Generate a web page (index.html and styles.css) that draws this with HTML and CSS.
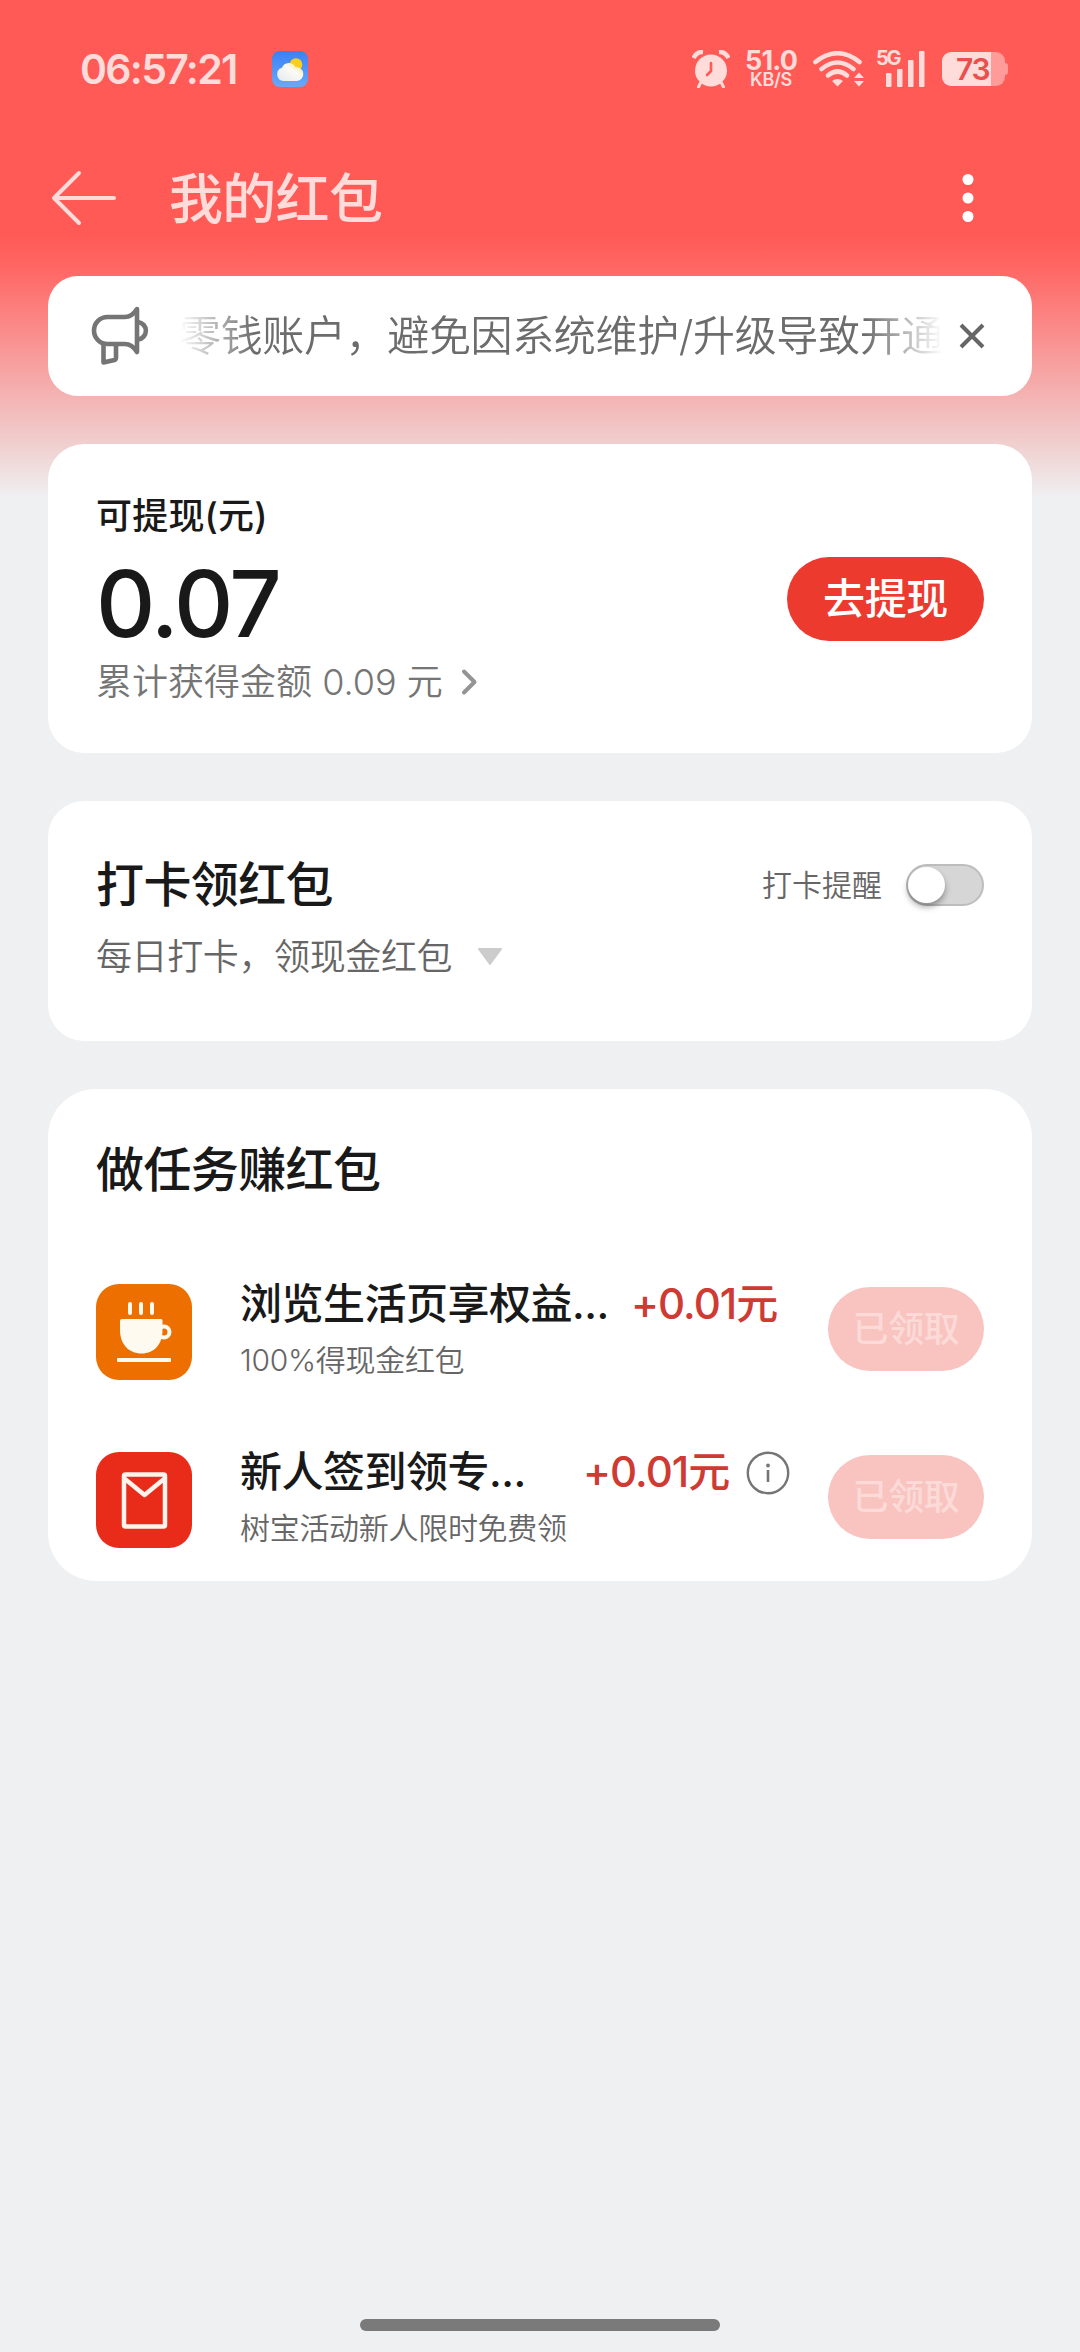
FILE: index.html
```html
<!DOCTYPE html>
<html lang="zh-CN">
<head>
<meta charset="utf-8">
<title>我的红包</title>
<link rel="stylesheet" href="styles.css">
</head>
<body>
<div class="page">
  <div class="status-bar">
    <span class="clock">06:57:21</span>
    <svg class="weather" width="36" height="36" viewBox="0 0 36 36">
      <defs>
        <linearGradient id="sky" x1="0" y1="0" x2="0" y2="1"><stop offset="0" stop-color="#3a7ff6"/><stop offset="1" stop-color="#69aaf6"/></linearGradient>
        <linearGradient id="cloud" x1="0" y1="1" x2="1" y2="0"><stop offset="0" stop-color="#e3e9ef"/><stop offset=".6" stop-color="#fbfbf5"/><stop offset="1" stop-color="#f8dc60"/></linearGradient>
      </defs>
      <rect width="36" height="36" rx="8" fill="url(#sky)"/>
      <circle cx="24" cy="13.5" r="6.3" fill="#fbce1c"/>
      <path d="M11.500 30a6.800 6.800 0 0 1-1.500-13.300a7.500 7.500 0 0 1 13.500-.7a7 7 0 0 1 1.500 14z" fill="url(#cloud)"/>
    </svg>
    <div class="indicators">
      <svg class="alarm" width="38" height="38" viewBox="0 0 38 38" fill="#ffdbda">
        <path d="M1.500 8Q5 1.500 11 2" fill="none" stroke="#ffdbda" stroke-width="4.500"/>
        <path d="M36.500 8Q33 1.500 27 2" fill="none" stroke="#ffdbda" stroke-width="4.500"/>
        <path d="M8.500 33l-2 4M29.500 33l2 4" stroke="#ffdbda" stroke-width="3" stroke-linecap="round"/>
        <circle cx="19" cy="20.500" r="16"/>
        <path d="M19 13v8l-4 4" fill="none" stroke="#ff5a56" stroke-width="2.600" stroke-linecap="round" stroke-linejoin="round"/>
      </svg>
      <div class="speed"><span class="speed-value">51.0</span><span class="speed-unit">KB/S</span></div>
      <svg class="wifi" width="51" height="36" viewBox="0 0 51 36">
        <g fill="none" stroke="#ffdbda" stroke-width="4.600" stroke-linecap="round">
          <path d="M2.500 11Q24.500-6.500 46.500 11"/><path d="M8.500 18Q24.500 5 40.500 18"/><path d="M15 24.500Q24.500 16.500 34 24.500"/>
        </g>
        <path d="M24.500 35.500l-5.500-5.500q5.500-4 11 0z" fill="#ffdbda"/>
        <path d="M46 21.500l5 5.500h-10zM46 35.500l5-5.500h-10z" fill="#ffdbda"/>
      </svg>
      <div class="cell">
        <span class="cell-type">5G</span>
        <svg width="40" height="36" viewBox="0 0 40 36" fill="#ffdbda"><rect x="0" y="22" width="5.500" height="14" rx="1"/><rect x="11" y="18" width="5.500" height="18" rx="1"/><rect x="22" y="9" width="5.500" height="27" rx="1"/><rect x="33" y="0" width="5.500" height="36" rx="1"/></svg>
      </div>
      <div class="battery"><span class="battery-body">73</span><span class="battery-tip"></span></div>
    </div>
  </div>

  <header class="nav">
    <svg class="back" width="66" height="56" viewBox="0 0 66 56" fill="none" stroke="#ffdbda" stroke-width="4" stroke-linecap="round" stroke-linejoin="round"><path d="M28 3L3 28l25 25M3 28h60"/></svg>
    <h1 class="nav-title">我的红包</h1>
    <svg class="more" width="12" height="50" viewBox="0 0 12 50" fill="#fff"><circle cx="6" cy="6.500" r="5.500"/><circle cx="6" cy="25" r="5.500"/><circle cx="6" cy="43.500" r="5.500"/></svg>
  </header>

  <main class="content">
    <section class="card notice">
      <svg class="horn" width="60" height="60" viewBox="0 0 60 60" fill="none" stroke="#757575" stroke-width="4.600" stroke-linejoin="round">
        <path d="M34 11H16.500a13.500 13.500 0 0 0 0 27H34q7 0 12 8V3q-5 8-12 8z"/>
        <path d="M47 16a8.800 8.800 0 0 1 0 17.500M12.500 38v18.500l11-2.500q1.500-.5 1.500-2.500V38"/>
      </svg>
      <div class="notice-text">零钱账户，避免因系统维护/升级导致开通</div>
      <svg class="close" width="28" height="28" viewBox="0 0 28 28" fill="none" stroke="#666" stroke-width="4"><path d="M3 3l22 22M25 3L3 25"/></svg>
    </section>

    <section class="card balance">
      <div>
        <div class="balance-label">可提现(元)</div>
        <div class="balance-amount">0.07</div>
        <div class="balance-total"><span>累计获得金额 0.09 元</span>
          <svg width="18" height="28" viewBox="0 0 18 28" fill="none" stroke="#949494" stroke-width="4" stroke-linecap="round" stroke-linejoin="round"><path d="M4 3.500l10.500 10.500L4 24.500"/></svg>
        </div>
      </div>
      <button class="withdraw">去提现</button>
    </section>

    <section class="card checkin">
      <div class="checkin-head">
        <h2 class="card-title">打卡领红包</h2>
        <span class="remind">打卡提醒</span>
        <span class="toggle"><span class="knob"></span></span>
      </div>
      <div class="checkin-sub"><span>每日打卡，领现金红包</span>
        <svg width="26" height="18" viewBox="0 0 26 18"><path d="M2 1h22L13 16z" fill="#ccc" stroke="#ccc" stroke-width="2" stroke-linejoin="round"/></svg>
      </div>
    </section>

    <section class="card tasks">
      <h2 class="card-title">做任务赚红包</h2>
      <div class="task">
        <svg class="task-icon" width="96" height="96" viewBox="0 0 96 96">
          <rect width="96" height="96" rx="23" fill="#ed6f00"/>
          <g fill="#fffaf0"><path d="M26 35h39q1.500 0 1.500 1.500V46c0 14-8 23.500-21 23.500S24 60 24 46v-9q0-2 2-2z"/><rect x="21" y="74" width="54" height="4" rx="1"/><rect x="32" y="18" width="4" height="13" rx="2"/><rect x="43" y="18" width="4" height="13" rx="2"/><rect x="54" y="18" width="4" height="13" rx="2"/></g>
          <circle cx="68" cy="48" r="5.500" fill="none" stroke="#fffaf0" stroke-width="4"/>
        </svg>
        <div class="task-body">
          <div class="task-row"><span class="task-title">浏览生活页享权益...</span><span class="reward">+0.01元</span></div>
          <div class="task-desc">100%得现金红包</div>
        </div>
        <button class="claimed">已领取</button>
      </div>
      <div class="task">
        <svg class="task-icon" width="96" height="96" viewBox="0 0 96 96">
          <rect width="96" height="96" rx="23" fill="#e92c19"/>
          <g fill="none" stroke="#fff3ee" stroke-width="4.500" stroke-linejoin="round"><rect x="28" y="22.500" width="41" height="52" rx="1.500"/><path d="M29 27l19.500 16L68 27"/></g>
        </svg>
        <div class="task-body">
          <div class="task-row"><span class="task-title task-title-short">新人签到领专...</span><span class="reward">+0.01元</span>
            <svg class="info" width="44" height="44" viewBox="0 0 44 44"><circle cx="22" cy="22" r="20.200" fill="none" stroke="#757575" stroke-width="2.400"/><circle cx="22" cy="14.500" r="1.900" fill="#757575"/><rect x="20.700" y="19" width="2.600" height="12" fill="#757575"/></svg>
          </div>
          <div class="task-desc">树宝活动新人限时免费领</div>
        </div>
        <button class="claimed">已领取</button>
      </div>
    </section>
  </main>
  <div class="home-bar"></div>
</div>
</body>
</html>
```
FILE: styles.css
```css
* { box-sizing: border-box; }

body {
  margin: 0;
  font-family: Inter, "Noto Sans CJK SC", sans-serif;
  color: #191919;
}

h1, h2 { margin: 0; font-weight: 500; }
svg { display: block; flex: none; }
button { border: 0; padding: 0; font-family: inherit; font-weight: 500; color: #fff; }

.page {
  display: flex;
  flex-direction: column;
  width: 1080px;
  height: 2352px;
  background: linear-gradient(#ff5a56 0, #ff5a56 235px, #ff6764 268px, #f4b5b5 400px, #f0cfce 444px, #eff0f2 498px);
  overflow: hidden;
}

/* System status bar */
.status-bar {
  display: flex;
  align-items: center;
  height: 140px;
  padding: 0 72px 2px 80px;
  color: #ffdbda;
}
.clock { width: 192px; font-size: 41px; font-weight: 600; letter-spacing: -1.7px; white-space: nowrap; }
.indicators { display: flex; align-items: center; margin-left: auto; }
.alarm { margin-right: 14px; }
.speed { display: flex; flex-direction: column; align-items: center; width: 54px; font-weight: 700; margin-right: 15px; }
.speed-value { font-size: 27px; line-height: 21px; letter-spacing: -.8px; }
.speed-unit { font-size: 18px; line-height: 17px; font-weight: 600; letter-spacing: -.3px; }
.wifi { margin-right: 12px; }
.cell { display: flex; margin-right: 16px; }
.cell-type { width: 10px; font-size: 20px; line-height: 15px; font-weight: 700; letter-spacing: -2.2px; }
.battery { display: flex; align-items: center; }
.battery-body {
  width: 63px;
  height: 34px;
  padding-left: 14px;
  border-radius: 9px;
  background: linear-gradient(90deg, #ffdbda 49px, #ff9b99 49px);
  color: #e9504d;
  font-size: 30px;
  line-height: 35px;
  font-weight: 600;
  letter-spacing: -1.2px;
}
.battery-tip { width: 3px; height: 12px; border-radius: 0 3px 3px 0; background: #ff9b99; }

/* Title bar */
.nav { display: flex; align-items: center; height: 116px; padding: 0 106px 0 51px; }
.back { margin-right: 52px; }
.nav-title { flex: 1; padding-top: 3px; font-size: 54px; line-height: 60px; letter-spacing: -.7px; color: #ffdbda; }

.content { display: flex; flex-direction: column; padding: 20px 48px 0; }
.card { border-radius: 36px; background: #fff; }
.card-title { padding-top: 1px; font-size: 48px; line-height: 60px; height: 60px; letter-spacing: -.6px; }

.notice { display: flex; align-items: center; height: 120px; padding: 0 46px 0 43px; border-radius: 30px; }
.horn { margin-right: 28px; }
.notice-text {
  width: 764px;
  margin-right: 15px;
  overflow: hidden;
  color: #6c6c6c;
  font-size: 42px;
  line-height: 60px;
  font-weight: 350;
  letter-spacing: -.35px;
  white-space: nowrap;
  -webkit-mask-image: linear-gradient(90deg, transparent, #000 75px, #000 686px, transparent);
  mask-image: linear-gradient(90deg, transparent, #000 75px, #000 686px, transparent);
}

.balance { display: flex; justify-content: space-between; height: 309px; margin-top: 48px; padding: 48px; }
.balance-label { font-size: 36px; line-height: 48px; font-weight: 500; letter-spacing: .2px; }
.balance-amount { margin-top: 5px; font-size: 92px; line-height: 117px; font-weight: 500; letter-spacing: -2.2px; }
.balance-total { display: flex; align-items: center; gap: 17px; font-size: 36px; line-height: 40px; font-weight: 350; color: #757575; }
.withdraw { width: 197px; height: 84px; margin-top: 65px; border-radius: 42px; background: #ec3a2f; font-size: 42px; line-height: 82px; letter-spacing: -.4px; }

.checkin { height: 240px; margin-top: 48px; padding: 53px 48px 0; }
.checkin-head { display: flex; align-items: center; }
.remind { margin: -3px 0 0 auto; font-size: 30px; font-weight: 350; color: #666; }
.toggle { width: 78px; height: 42px; margin: 2px 0 0 24px; padding: 1px 0; border: 2px solid #bdbdbd; border-radius: 21px; background: #d6d6d6; }
.knob { display: block; width: 37px; height: 36px; border-radius: 50%; background: #fff; box-shadow: 0 4px 6px rgba(0, 0, 0, .35); }
.checkin-sub { display: flex; align-items: center; gap: 25px; margin-top: 19px; font-size: 36px; line-height: 48px; font-weight: 350; letter-spacing: -.38px; color: #666; }

.tasks { height: 492px; margin-top: 48px; padding: 50px 48px 0; border-radius: 48px; }
.task { display: flex; margin-top: 72px; }
.card-title + .task { margin-top: 85px; }
.task-body { flex: 1; margin: -4px 0 0 48px; }
.task-row { display: flex; align-items: center; height: 48px; font-size: 42px; line-height: 48px; font-weight: 500; letter-spacing: -.5px; white-space: nowrap; }
.task-title { width: 367px; }
.task-title-short { width: 319px; }
.reward { margin-left: 24px; color: #cf3a33; letter-spacing: -1px; }
.info { margin: 1px 0 0 17px; }
.task-desc { margin-top: 14px; font-size: 30px; line-height: 36px; font-weight: 350; letter-spacing: -.3px; color: #666; }
.claimed { width: 156px; height: 84px; margin-top: 3px; border-radius: 42px; background: #f9c3c0; color: #fbdad8; font-size: 36px; line-height: 82px; letter-spacing: -.3px; }

.home-bar { width: 360px; height: 12px; margin: auto auto 21px; border-radius: 6px; background: #7a7a7a; }
```
